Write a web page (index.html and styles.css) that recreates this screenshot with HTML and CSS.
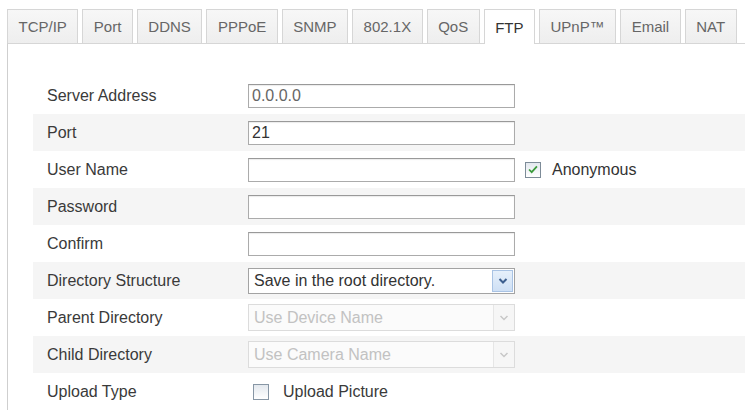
FILE: index.html
```html
<!DOCTYPE html>
<html>
<head>
<meta charset="utf-8">
<link rel="stylesheet" href="styles.css">
</head>
<body>
<div class="page">
  <div class="tabs">
    <div class="tab">TCP/IP</div>
    <div class="tab">Port</div>
    <div class="tab">DDNS</div>
    <div class="tab">PPPoE</div>
    <div class="tab">SNMP</div>
    <div class="tab">802.1X</div>
    <div class="tab">QoS</div>
    <div class="tab active">FTP</div>
    <div class="tab">UPnP™</div>
    <div class="tab">Email</div>
    <div class="tab">NAT</div>
  </div>
  <div class="panel">
    <div class="row">
      <div class="label">Server Address</div>
      <div class="input muted">0.0.0.0</div>
    </div>
    <div class="row">
      <div class="label">Port</div>
      <div class="input">21</div>
    </div>
    <div class="row">
      <div class="label">User Name</div>
      <div class="input"></div>
      <span class="cb checked side">
        <svg viewBox="0 0 16 16" width="15" height="15"><path d="M3.5 8 L6.5 11 L12.5 4.5" fill="none" stroke="#3b9b3b" stroke-width="2"/></svg>
      </span>
      <span class="cblabel">Anonymous</span>
    </div>
    <div class="row">
      <div class="label">Password</div>
      <div class="input"></div>
    </div>
    <div class="row">
      <div class="label">Confirm</div>
      <div class="input"></div>
    </div>
    <div class="row">
      <div class="label">Directory Structure</div>
      <div class="select">
        <span class="seltext">Save in the root directory.</span>
        <span class="arrow">
          <svg viewBox="0 0 12 12" width="12" height="12"><path d="M2.5 4 L6 7.5 L9.5 4" fill="none" stroke="#3d5f8f" stroke-width="2"/></svg>
        </span>
      </div>
    </div>
    <div class="row">
      <div class="label">Parent Directory</div>
      <div class="select disabled">
        <span class="seltext">Use Device Name</span>
        <span class="arrow">
          <svg viewBox="0 0 12 12" width="12" height="12"><path d="M2.5 4 L6 7.5 L9.5 4" fill="none" stroke="#c8c8c8" stroke-width="1.5"/></svg>
        </span>
      </div>
    </div>
    <div class="row">
      <div class="label">Child Directory</div>
      <div class="select disabled">
        <span class="seltext">Use Camera Name</span>
        <span class="arrow">
          <svg viewBox="0 0 12 12" width="12" height="12"><path d="M2.5 4 L6 7.5 L9.5 4" fill="none" stroke="#c8c8c8" stroke-width="1.5"/></svg>
        </span>
      </div>
    </div>
    <div class="row">
      <div class="label">Upload Type</div>
      <span class="cb upload"></span>
      <span class="cblabel">Upload Picture</span>
    </div>
  </div>
</div>
</body>
</html>
```
FILE: styles.css
```css
html, body {
  margin: 0;
  padding: 0;
  background: #ffffff;
}
body {
  font-family: "Liberation Sans", Arial, sans-serif;
  font-size: 16px;
  color: #333;
}
.page {
  padding: 9px 0 0 7px;
  height: 405px;
  overflow: hidden;
}
.tabs {
  display: flex;
  align-items: flex-end;
  gap: 4px;
  position: relative;
  z-index: 2;
}
.tab {
  box-sizing: border-box;
  height: 34px;
  padding: 0 10.5px;
  border: 1px solid #d6d6d6;
  border-bottom: none;
  background: linear-gradient(#f7f7f7, #eeeeee);
  color: #666;
  font-size: 15px;
  display: flex;
  align-items: center;
  justify-content: center;
  white-space: nowrap;
}
.tab.active {
  height: 35px;
  margin-bottom: -1px;
  background: #ffffff;
  color: #333;
}
.panel {
  border-left: 1px solid #cfcfcf;
  border-top: 1px solid #d6d6d6;
  padding: 33px 0 0 25px;
}
.row {
  height: 37px;
  display: flex;
  align-items: center;
}
.row:nth-child(even) {
  background: #f5f5f5;
}
.label {
  width: 215px;
  box-sizing: border-box;
  padding-left: 14px;
  color: #3a3a3a;
  flex: none;
}
.input {
  box-sizing: border-box;
  width: 267px;
  height: 24px;
  border: 1px solid #ababab;
  border-top-color: #999;
  box-shadow: inset 0 1px 1px rgba(0,0,0,0.08);
  background: #fff;
  padding: 0 3px;
  line-height: 22px;
  color: #333;
  flex: none;
}
.input.muted {
  color: #666;
}
.cb {
  box-sizing: border-box;
  width: 16px;
  height: 16px;
  border: 1px solid #7d8b98;
  background: linear-gradient(#e3e8ee, #ffffff);
  display: inline-flex;
  align-items: center;
  justify-content: center;
  flex: none;
}
.cb.side {
  margin-left: 10px;
}
.cb.upload {
  margin-left: 5px;
  margin-top: 1px;
  border-color: #8796a5;
}
.cblabel {
  margin-left: 11px;
  color: #333;
}
.cb.upload + .cblabel {
  margin-left: 14px;
  color: #3a3a3a;
}
.select {
  box-sizing: border-box;
  width: 267px;
  height: 26px;
  border: 1px solid #a3a3a3;
  background: #fff;
  display: flex;
  align-items: center;
  flex: none;
}
.seltext {
  flex: 1;
  padding-left: 5px;
  color: #333;
  white-space: nowrap;
}
.arrow {
  box-sizing: border-box;
  width: 21px;
  height: 22px;
  margin-right: 1px;
  border: 1px solid #a9c3e4;
  background: linear-gradient(#e6f0fb, #cfe0f5);
  display: flex;
  align-items: center;
  justify-content: center;
}
.select.disabled {
  border-color: #dcdcdc;
  background: #fbfbfb;
  height: 27px;
}
.select.disabled .seltext {
  color: #c2c2c2;
}
.select.disabled .arrow {
  border: none;
  border-left: 1px solid #e6e6e6;
  background: #f6f6f6;
  height: 25px;
  margin-right: 0;
}
```
